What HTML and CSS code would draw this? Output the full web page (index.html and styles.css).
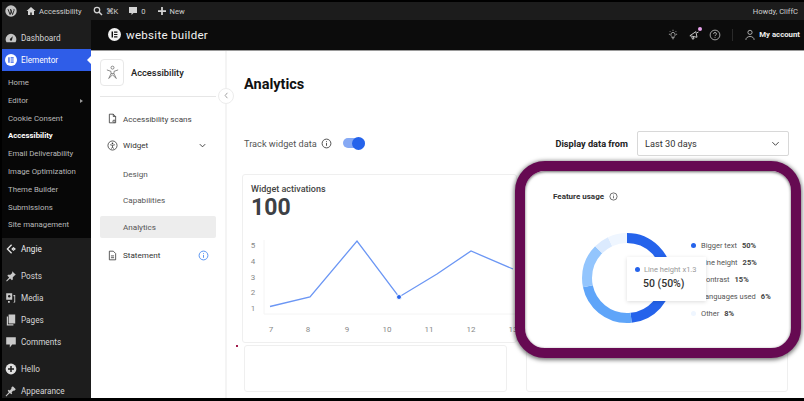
FILE: index.html
```html
<!DOCTYPE html>
<html>
<head>
<title>Accessibility Analytics</title>
<link rel="stylesheet" href="styles.css">
</head>
<body>
<svg class="sprites" width="0" height="0">
    <symbol id="eMark" viewBox="0 0 20 20"><circle cx="10" cy="10" r="10" fill="currentColor"/><path d="M5.500 5.500h2.200v9H5.500zM9.300 5.500h5.200v1.900H9.300zM9.300 9.050h5.200v1.900H9.300zM9.300 12.600h5.200v1.900H9.300z" fill="var(--e-ink)"/></symbol>
    <symbol id="info" viewBox="0 0 12 12"><circle cx="6" cy="6" r="4.800" fill="none" stroke="currentColor"/><path d="M6 5.500v3M6 3.500v1" stroke="currentColor" fill="none"/></symbol>
</svg>
<div class="pantalla">
    <header class="adminBar">
        <svg class="adminIcon wpLogo" viewBox="0 0 20 20"><circle cx="10" cy="10" r="9.500" fill="#c4c4c4"/><path d="M5 7l3.500 9 2-6-1-3M9 7l3.500 9 2.500-7c.4-1.200-.2-2-1-2.500" fill="none" stroke="#1c1c1c" stroke-width="1.500"/></svg>
        <svg class="adminIcon homeIcon" viewBox="0 0 20 20"><path d="M10 2L1 10h3v8h4.500v-5h3v5H16v-8h3z" fill="#d4d4d4"/></svg>
        <span class="adminText siteName">Accessibility</span>
        <svg class="adminIcon searchIcon" viewBox="0 0 20 20"><circle cx="8" cy="8" r="5.500" fill="none" stroke="#d4d4d4" stroke-width="2.500"/><path d="M12 12l6 6" stroke="#d4d4d4" stroke-width="3"/></svg>
        <span class="adminText shortcut">⌘K</span>
        <svg class="adminIcon commentIcon" viewBox="0 0 20 20"><path d="M2 2h16v12h-7l-4 4v-4H2z" fill="#d4d4d4"/></svg>
        <span class="adminText commentCount">0</span>
        <svg class="adminIcon plusIcon" viewBox="0 0 20 20"><path d="M10 2v16M2 10h16" stroke="#d4d4d4" stroke-width="3.500"/></svg>
        <span class="adminText">New</span>
        <span class="adminText howdy">Howdy, CliffC</span>
    </header>
    <div class="cuerpo">
        <nav class="sidebar">
            <a class="menuItem dashboardItem">
                <svg class="menuIcon" viewBox="0 0 20 20"><path d="M10 3a9 9 0 0 0-9 9c0 2 .6 3.500 1.500 5h15c.9-1.500 1.500-3 1.500-5a9 9 0 0 0-9-9zm0 11.500a2 2 0 0 1-1-3.700L13 7l-1.500 7z" fill="#c4c4c4"/></svg>
                Dashboard
            </a>
            <a class="menuItem activo">
                <svg class="menuIcon eIcon"><use href="#eMark"/></svg>
                Elementor
            </a>
            <ul class="submenu">
                <li>Home</li>
                <li class="conFlecha">Editor</li>
                <li>Cookie Consent</li>
                <li class="actual">Accessibility</li>
                <li>Email Deliverability</li>
                <li>Image Optimization</li>
                <li>Theme Builder</li>
                <li>Submissions</li>
                <li>Site management</li>
            </ul>
            <a class="menuItem angieItem">
                <svg class="menuIcon" viewBox="0 0 20 20"><path d="M11 3L4 10l7 7M14 8l2.500 2-2.500 2-2-2z" fill="none" stroke="#e4e4e4" stroke-width="2.200"/></svg>
                Angie
            </a>
            <a class="menuItem postsItem">
                <svg class="menuIcon" viewBox="0 0 20 20"><path d="M12 2l6 6-2 1-3 3 0 4-1.500 1-3-3L3 19l-1-1 5-5.500-3-3L5 8h4l3-3z" fill="#c9c9c9"/></svg>
                Posts
            </a>
            <a class="menuItem">
                <svg class="menuIcon" viewBox="0 0 20 20"><path d="M2 2h10v11H2zM14 5h3v12l-2 1-1-1 1.500-1V7H14zM5 15h3v3H5z" fill="#c9c9c9"/><circle cx="7" cy="7" r="2" fill="#1d1d1d"/></svg>
                Media
            </a>
            <a class="menuItem">
                <svg class="menuIcon" viewBox="0 0 20 20"><path d="M6 1h11v15H6zM3 4h2v13h9v2H3z" fill="#c9c9c9"/></svg>
                Pages
            </a>
            <a class="menuItem">
                <svg class="menuIcon" viewBox="0 0 20 20"><path d="M2 2h16v12h-6l-4 5v-5H2z" fill="#c9c9c9"/></svg>
                Comments
            </a>
            <a class="menuItem helloItem">
                <svg class="menuIcon" viewBox="0 0 20 20"><circle cx="10" cy="10" r="9" fill="#e0e0e0"/><path d="M10 5v10M5 10h10" stroke="#1d1d1d" stroke-width="2.500"/></svg>
                Hello
            </a>
            <a class="menuItem">
                <svg class="menuIcon" viewBox="0 0 20 20"><path d="M13 2l5 5-3 3-1-1-3 3 1 2-1.500 1.500-2.500-2L2 19l-1-1 5.500-6L4.500 9.500 6 8l2 1 3-3-1-1z" fill="#c9c9c9"/></svg>
                Appearance
            </a>
        </nav>
        <div class="app">
            <div class="topHeader">
                <svg class="builderLogo"><use href="#eMark"/></svg>
                <span class="builderName">website builder</span>
                <div class="headerAcciones">
                    <svg class="headerIcon" viewBox="0 0 16 16"><path d="M8 4.500a3 3 0 0 0-1.500 5.500v1.500h3V10A3 3 0 0 0 8 4.500zM7 13h2M8 1v1.500M2.500 7H4M12 7h1.500M3.800 3l1 1M12.200 3l-1 1" fill="none" stroke="#c8c8c8"/></svg>
                    <span class="campana">
                        <svg class="headerIcon" viewBox="0 0 16 16"><path d="M2.500 9l8-5.500 1.500 7.500zM5 10.500l1 3 2-.5-.8-2.500M12 5l2-1" fill="none" stroke="#d8d8d8" stroke-width="1.200"/></svg>
                        <i class="punto"></i>
                    </span>
                    <svg class="headerIcon" viewBox="0 0 16 16"><circle cx="8" cy="8" r="6.500" fill="none" stroke="#d0d0d0"/><path d="M6 6.500c0-2.500 4-2.500 4 0 0 1.500-2 1.500-2 3M8 10.800v1" fill="none" stroke="#d0d0d0"/></svg>
                    <span class="separador"></span>
                    <svg class="headerIcon userIcon" viewBox="0 0 16 16"><circle cx="8" cy="4.500" r="2.800" fill="none" stroke="#d8d8d8"/><path d="M2.500 14.500c0-6 11-6 11 0" fill="none" stroke="#d8d8d8"/></svg>
                    <span class="miCuenta">My account</span>
                </div>
            </div>
            <div class="contenido">
                <aside class="panel">
                    <div class="panelTitulo">
                        <span class="panelLogo">
                            <svg viewBox="0 0 20 20"><circle cx="10" cy="3.500" r="2" fill="none" stroke="#666"/><path d="M2.500 6.500l5.500 2v3L5 18M17.500 6.500l-5.500 2v3l3 6.500M8 11.500h4M5 18l5-5 5 5" fill="none" stroke="#666"/></svg>
                        </span>
                        <span class="panelNombre">Accessibility</span>
                    </div>
                    <ul class="panelMenu">
                        <li class="panelItem scansItem">
                            <svg viewBox="0 0 14 14"><path d="M3 1.500h5l3 3v8H3zM8 1.500v3h3" fill="none" stroke="#333"/><circle cx="9" cy="10.500" r="1.500" fill="#fff" stroke="#333"/></svg>
                            Accessibility scans
                        </li>
                        <li class="panelItem widgetItem">
                            <svg viewBox="0 0 14 14"><circle cx="7" cy="7" r="5.800" fill="none" stroke="#333"/><circle cx="7" cy="4.300" r="1" fill="#333"/><path d="M4 6l3 .8L10 6M7 7v2l-1.500 2M7 9l1.500 2" fill="none" stroke="#333"/></svg>
                            Widget
                            <svg class="panelChevron" viewBox="0 0 10 10"><path d="M2 3.500l3 3 3-3" fill="none" stroke="#333"/></svg>
                        </li>
                        <li class="panelSub">Design</li>
                        <li class="panelSub">Capabilities</li>
                        <li class="panelSub elegido">Analytics</li>
                        <li class="panelItem statementItem">
                            <svg viewBox="0 0 14 14"><path d="M3 1.500h5l3 3v8H3zM5 7.500h4M5 9.800h4" fill="none" stroke="#333"/></svg>
                            Statement
                            <svg class="statementInfo"><use href="#info"/></svg>
                        </li>
                    </ul>
                </aside>
                <button class="colapsar"><svg viewBox="0 0 10 10"><path d="M6 2L3.500 5 6 8" fill="none" stroke="#999"/></svg></button>
                <main class="analytics">
                    <h1>Analytics</h1>
                    <div class="filaControles">
                        <span class="trackLabel">Track widget data</span>
                        <svg class="trackInfo"><use href="#info"/></svg>
                        <span class="toggle"><i></i></span>
                        <span class="displayLabel">Display data from</span>
                        <div class="selector">
                            Last 30 days
                            <svg viewBox="0 0 10 10"><path d="M1.500 3.500L5 7l3.500-3.500" fill="none" stroke="#333"/></svg>
                        </div>
                    </div>
                    <div class="tarjetas">
                        <section class="tarjeta activations">
                            <h2>Widget activations</h2>
                            <div class="numeroGrande">100</div>
                            <svg class="grafica" width="275" height="104" viewBox="242 236 275 104">
                                <path class="ejes" d="M264 240v74h253"/>
                                <g class="etiquetas">
                                    <text x="253" y="248">5</text>
                                    <text x="253" y="264">4</text>
                                    <text x="253" y="280">3</text>
                                    <text x="253" y="295">2</text>
                                    <text x="253" y="311">1</text>
                                    <text x="271" y="332">7</text>
                                    <text x="308" y="332">8</text>
                                    <text x="347" y="332">9</text>
                                    <text x="387" y="332">10</text>
                                    <text x="429" y="332">11</text>
                                    <text x="471" y="332">12</text>
                                    <text x="513" y="332">13</text>
                                </g>
                                <path class="linea" d="M270 306.500L310 297 357 241 399 297 437 274 471 251 513 269"/>
                                <circle cx="399" cy="297" r="2.500" fill="#2563eb" stroke="#fff"/>
                            </svg>
                        </section>
                        <section class="tarjeta vacia"></section>
                        <section class="tarjeta vacia segunda"></section>
                        <section class="tarjeta vacia tercera"></section>
                    </div>
                </main>
            </div>
        </div>
    </div>
    <i class="marca"></i>
    <section class="resaltado">
        <div class="featureTitulo">
            Feature usage
            <svg><use href="#info"/></svg>
        </div>
        <div class="featureCuerpo">
            <svg class="dona" width="92" height="92" viewBox="0 0 92 92">
                <circle class="seg" cx="46" cy="46" r="40" pathLength="360" stroke="#2563eb" stroke-dasharray="174 360" stroke-dashoffset="0"/>
                <circle class="seg" cx="46" cy="46" r="40" pathLength="360" stroke="#5fa5f9" stroke-dasharray="84 360" stroke-dashoffset="-174"/>
                <circle class="seg" cx="46" cy="46" r="40" pathLength="360" stroke="#93c5fd" stroke-dasharray="57 360" stroke-dashoffset="-258"/>
                <circle class="seg" cx="46" cy="46" r="40" pathLength="360" stroke="#dbeafe" stroke-dasharray="20 360" stroke-dashoffset="-315"/>
                <circle class="seg" cx="46" cy="46" r="40" pathLength="360" stroke="#eff6ff" stroke-dasharray="25 360" stroke-dashoffset="-335"/>
            </svg>
            <ul class="leyenda">
                <li><i class="d1"></i>Bigger text <b>50%</b></li>
                <li><i class="d2"></i>Line height <b>25%</b></li>
                <li><i class="d3"></i>Contrast <b>15%</b></li>
                <li><i class="d4"></i>Languages used <b>6%</b></li>
                <li><i class="d5"></i>Other <b>8%</b></li>
            </ul>
        </div>
        <div class="tooltip">
            <div class="tooltipLabel"><i></i>Line height x1.3</div>
            <div class="tooltipValor">50 (50%)</div>
        </div>
    </section>
</div>
</body>
</html>
```

FILE: styles.css
```css
* {
    box-sizing: border-box;
    padding: 0;
    margin: 0;
}
html, body {
    width: 804px;
    height: 401px;
    overflow: hidden;
    background-color: #000;
    font-family: Roboto, "Liberation Sans", sans-serif;
}
.sprites {
    position: absolute;
}
.pantalla {
    position: relative;
    width: 804px;
    height: 396px;
    margin-top: 2px;
    padding-left: 2px;
    display: flex;
    flex-direction: column;
    overflow: hidden;
}

/* barra de arriba */
.adminBar {
    height: 18px;
    flex: none;
    background-color: #1c1c1c;
    display: flex;
    align-items: center;
    padding-left: 3px;
    color: #cfcfcf;
    font-size: 7.600px;
}
.adminIcon {
    width: 10px;
    height: 10px;
    flex: none;
}
.wpLogo {
    width: 12px;
    height: 12px;
    margin-right: 9px;
}
.siteName {
    margin: 0 11px 0 3px;
}
.shortcut {
    margin: 0 10px 0 3px;
}
.commentCount {
    margin: 0 11px 0 3px;
}
.plusIcon {
    margin-right: 3px;
}
.howdy {
    margin-left: auto;
    margin-right: 6px;
}

.cuerpo {
    flex: 1;
    display: flex;
    min-height: 0;
}

/* menu lateral */
.sidebar {
    width: 89px;
    flex: none;
    background-color: #1d1d1d;
    color: #d6d6d6;
    font-size: 8.200px;
    display: flex;
    flex-direction: column;
    overflow: hidden;
}
.menuItem {
    height: 22px;
    flex: none;
    display: flex;
    align-items: center;
    padding-left: 19px;
    position: relative;
}
.menuIcon {
    position: absolute;
    left: 3px;
    top: 5px;
    width: 12px;
    height: 12px;
}
.dashboardItem {
    margin-top: 7px;
}
.activo {
    background-color: #2f5de8;
    color: #fff;
    --e-ink: #2f5de8;
}
.activo::after {
    content: "";
    position: absolute;
    right: 0;
    top: 7px;
    border: 4px solid transparent;
    border-right-color: #fff;
}
.submenu {
    list-style: none;
    flex: none;
    background-color: #070707;
    padding: 3px 0 0 6px;
    height: 167px;
    font-size: 7.800px;
    color: #b9b9b9;
}
.submenu li {
    height: 17.800px;
    line-height: 17.800px;
    position: relative;
}
.submenu .actual {
    color: #fff;
    font-weight: 700;
}
.conFlecha::after {
    content: "";
    position: absolute;
    right: 6px;
    top: 7px;
    border: 2px solid transparent;
    border-left: 3px solid #999;
}
.angieItem {
    color: #eee;
    height: 21px;
}
.postsItem {
    margin-top: 6px;
}
.helloItem {
    margin-top: 5px;
}

/* aplicacion */
.app {
    flex: 1;
    display: flex;
    flex-direction: column;
    min-width: 0;
    background-color: #fff;
}
.topHeader {
    height: 30.500px;
    flex: none;
    background-color: #0c0c0c;
    border-bottom: 1px solid #9a9a9a;
    display: flex;
    align-items: center;
    padding-left: 17px;
    --e-ink: #0c0c0c;
    color: #f2f2f2;
}
.builderLogo {
    width: 13px;
    height: 13px;
    margin-right: 5px;
}
.builderName {
    font-size: 11.500px;
    letter-spacing: 0.3px;
}
.headerAcciones {
    margin-left: auto;
    display: flex;
    align-items: center;
    gap: 9px;
    padding-right: 4px;
}
.headerIcon {
    width: 12px;
    height: 12px;
    display: block;
}
.campana {
    position: relative;
}
.punto {
    position: absolute;
    right: -2px;
    top: -2px;
    width: 4px;
    height: 4px;
    border-radius: 50%;
    background-color: #e9a3ee;
}
.separador {
    width: 1px;
    height: 12px;
    background-color: #2a2a2a;
    margin: 0 2px;
}
.userIcon {
    margin-right: -6px;
}
.miCuenta {
    font-size: 7.800px;
    font-weight: 700;
    color: #eee;
}

.contenido {
    flex: 1;
    display: flex;
    min-height: 0;
    position: relative;
}
.panel {
    width: 136px;
    flex: none;
    border-right: 2px solid #f4f4f4;
    padding: 9px 9px 0 9px;
}
.panelTitulo {
    display: flex;
    align-items: center;
    gap: 7px;
    padding-bottom: 10px;
    border-bottom: 1px solid #e6e6e6;
    height: 37.500px;
}
.panelLogo {
    width: 24px;
    height: 27px;
    border: 1px solid #e8e8e8;
    border-radius: 4px;
    display: flex;
    align-items: center;
    justify-content: center;
}
.panelLogo svg {
    width: 15px;
    height: 15px;
}
.panelNombre {
    font-size: 9.300px;
    font-weight: 500;
    color: #222;
}
.panelMenu {
    list-style: none;
    font-size: 8.100px;
    color: #444;
    margin-top: 8.500px;
}
.panelItem {
    height: 26.500px;
    display: flex;
    align-items: center;
    gap: 5px;
    padding-left: 7px;
}
.panelItem svg {
    width: 11px;
    height: 11px;
}
.panelItem .panelChevron {
    width: 9px;
    height: 9px;
    margin-left: auto;
    margin-right: 9px;
}
.widgetItem, .statementItem {
    color: #333;
}
.widgetItem {
    margin-bottom: 4px;
}
.panelSub {
    height: 22px;
    margin-bottom: 4.500px;
    line-height: 22px;
    padding-left: 23px;
    border-radius: 2px;
    color: #555;
}
.elegido {
    background-color: #ededed;
}
.panelItem .statementInfo {
    margin-left: auto;
    margin-right: 7px;
    width: 11px;
    height: 11px;
    color: #4d8df0;
}
.colapsar {
    position: absolute;
    left: 127px;
    top: 37px;
    width: 16px;
    height: 16px;
    border: 1px solid #ececec;
    border-radius: 50%;
    background-color: #fff;
    display: flex;
    align-items: center;
    justify-content: center;
}
.colapsar svg {
    width: 9px;
    height: 9px;
}

/* zona principal */
.analytics {
    flex: 1;
    min-width: 0;
    padding: 25px 15px 0 15px;
    overflow: hidden;
}
.analytics h1 {
    font-size: 14.500px;
    line-height: 18px;
    font-weight: 700;
    color: #111;
    margin-left: 2px;
}
.filaControles {
    display: flex;
    align-items: center;
    margin: 37px 0 0 2px;
    height: 25px;
    font-size: 9.200px;
    color: #555;
}
.trackInfo {
    width: 11px;
    height: 11px;
    margin-left: 4px;
    color: #444;
}
.toggle {
    width: 22px;
    height: 10px;
    border-radius: 5px;
    background-color: #86a9f4;
    margin-left: 11px;
    position: relative;
}
.toggle i {
    position: absolute;
    right: 0;
    top: -1.500px;
    width: 13px;
    height: 13px;
    border-radius: 50%;
    background-color: #2563eb;
}
.displayLabel {
    margin-left: auto;
    margin-right: 9px;
    font-weight: 700;
    color: #222;
}
.selector {
    width: 152px;
    height: 25px;
    border: 1px solid #d8d8d8;
    border-radius: 2px;
    display: flex;
    align-items: center;
    justify-content: space-between;
    padding: 0 8px 0 7px;
    color: #333;
}
.selector svg {
    width: 9px;
    height: 9px;
}
.tarjetas {
    display: grid;
    grid-template-columns: 275px 262px;
    grid-template-rows: 169px 47px;
    column-gap: 9px;
    row-gap: 2px;
    margin: 18px 0 0 0;
}
.tarjeta {
    border: 1px solid #efefef;
    border-radius: 3px;
    background-color: #fff;
}
.activations {
    padding: 9px 0 0 8px;
    position: relative;
}
.activations h2 {
    font-size: 9px;
    line-height: 10px;
    font-weight: 500;
    color: #444;
}
.numeroGrande {
    font-size: 23px;
    line-height: 26px;
    font-weight: 700;
    color: #3d4045;
    margin-top: 1px;
}
.grafica {
    position: absolute;
    left: -1px;
    top: 61px;
}
.ejes {
    fill: none;
    stroke: #f4f4f4;
}
.etiquetas text {
    font-size: 8px;
    fill: #888;
    text-anchor: middle;
}
.linea {
    fill: none;
    stroke: #6b96f4;
    stroke-width: 1.300;
}
.segunda {
    margin: 0 9px 0 2px;
    grid-row: 2;
    grid-column: 1;
    width: 263px;
}
.tercera {
    grid-row: 2;
    grid-column: 2;
}
.marca {
    position: absolute;
    left: 236px;
    top: 343px;
    width: 2px;
    height: 1.500px;
    background-color: #a11c4c;
}

/* marco morado encima de la tarjeta */
.resaltado {
    position: absolute;
    left: 515px;
    top: 159px;
    width: 286px;
    height: 197px;
    background-color: #fff;
    border: 10px solid #660a52;
    border-radius: 30px;
    box-shadow: 0 1px 4px 1px rgba(0, 0, 0, 0.55), inset 0 1px 3px rgba(0, 0, 0, 0.6);
    padding: 20px 0 0 28px;
}
.featureTitulo {
    font-size: 8px;
    font-weight: 700;
    color: #333;
    display: flex;
    align-items: center;
    gap: 5px;
    height: 10px;
}
.featureTitulo svg {
    width: 9px;
    height: 9px;
    color: #444;
}
.featureCuerpo {
    display: flex;
    align-items: flex-start;
    margin: 31px 0 0 28px;
}
.dona {
    flex: none;
}
.seg {
    fill: none;
    stroke-width: 10;
    transform: rotate(-90deg);
    transform-origin: 46px 46px;
}
.leyenda {
    list-style: none;
    font-size: 7.500px;
    color: #555;
    margin: 5px 0 0 17px;
    white-space: nowrap;
}
.leyenda li {
    height: 17px;
    display: flex;
    align-items: center;
    gap: 4px;
}
.leyenda i {
    width: 5px;
    height: 5px;
    border-radius: 50%;
    margin-right: 1px;
    margin-left: 1px;
}
.leyenda b {
    margin-left: 1px;
    color: #444;
    font-weight: 700;
}
.d1 { background-color: #2563eb; }
.d2 { background-color: #5fa5f9; }
.d3 { background-color: #93c5fd; }
.d4 { background-color: #dbeafe; }
.d5 { background-color: #eff6ff; }
.tooltip {
    position: absolute;
    left: 102px;
    top: 86px;
    width: 79px;
    height: 44px;
    background-color: #fff;
    box-shadow: 0 1px 4px rgba(0, 0, 0, 0.14);
    padding: 8px 0 0 8px;
}
.tooltipLabel {
    font-size: 7.500px;
    color: #999;
    display: flex;
    align-items: center;
    gap: 4px;
}
.tooltipLabel i {
    width: 5px;
    height: 5px;
    border-radius: 50%;
    background-color: #2563eb;
}
.tooltipValor {
    font-size: 10.500px;
    font-weight: 500;
    color: #333;
    margin-top: 3px;
    padding-left: 8px;
}
```
